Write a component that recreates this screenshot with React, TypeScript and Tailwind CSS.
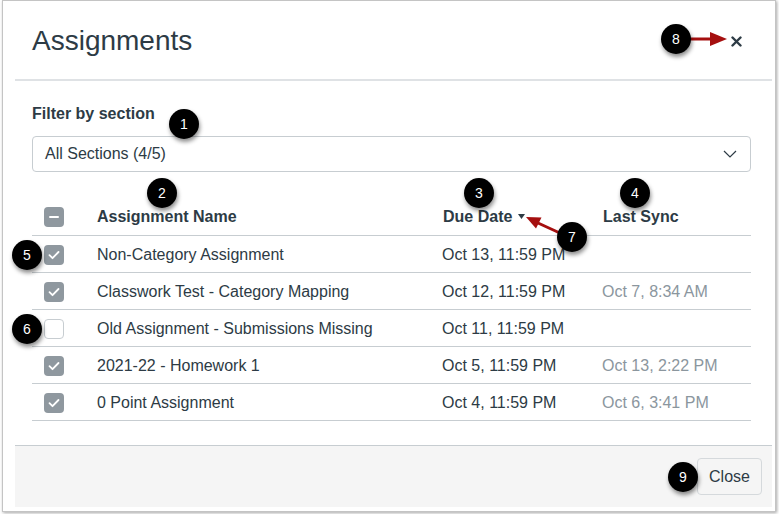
import React from "react";

type Row = {
  name: string;
  due: string;
  sync?: string;
  checked: boolean;
};

const rows: Row[] = [
  { name: "Non-Category Assignment", due: "Oct 13, 11:59 PM", checked: true },
  { name: "Classwork Test - Category Mapping", due: "Oct 12, 11:59 PM", sync: "Oct 7, 8:34 AM", checked: true },
  { name: "Old Assignment - Submissions Missing", due: "Oct 11, 11:59 PM", checked: false },
  { name: "2021-22 - Homework 1", due: "Oct 5, 11:59 PM", sync: "Oct 13, 2:22 PM", checked: true },
  { name: "0 Point Assignment", due: "Oct 4, 11:59 PM", sync: "Oct 6, 3:41 PM", checked: true },
];

function Checkbox({ checked }: { checked: boolean }) {
  if (!checked) {
    return <div className="ml-[12px] h-[20px] w-[20px] rounded-[4px] border border-[#c7cdd1] bg-white" />;
  }
  return (
    <div className="ml-[12px] flex h-[20px] w-[20px] items-center justify-center rounded-[4px] bg-[#8f989f]">
      <svg width="12" height="10" viewBox="0 0 12 10" fill="none">
        <path d="M1.5 5.2l3 3L10.5 2" stroke="white" strokeWidth="1.8" strokeLinecap="round" strokeLinejoin="round" />
      </svg>
    </div>
  );
}

function Badge({ n, className }: { n: number; className: string }) {
  return (
    <div
      className={
        "absolute flex h-[30px] w-[30px] items-center justify-center rounded-full bg-black text-[14px] leading-none text-white shadow-[1px_3px_4px_rgba(0,0,0,0.45)] " +
        className
      }
    >
      {n}
    </div>
  );
}

export default function App() {
  return (
    <div className="relative h-[514px] w-[779px] overflow-hidden bg-white pl-[2px] font-['Liberation_Sans',Arial,sans-serif] text-[#2d3b45]">
      <div className="flex h-[512px] w-[774px] flex-col border border-[#c4c4c4] bg-white pb-[4px] pl-[12px] pr-[3px] shadow-[1px_1px_3px_rgba(0,0,0,0.35)]">
        {/* header */}
        <div className="flex h-[80px] shrink-0 items-center justify-between border-b-2 border-[#dfe2e5] pl-[17px] pr-[30px] pt-[2px]">
          <h1 className="text-[28px] leading-[32px]">Assignments</h1>
          <svg width="11" height="11" viewBox="0 0 11 11">
            <path d="M1.5 1.5l8 8M9.5 1.5l-8 8" stroke="#2d3b45" strokeWidth="2.4" strokeLinecap="round" />
          </svg>
        </div>

        {/* body */}
        <div className="flex-1 pl-[17px] pr-[21px] pt-[23px]">
          <div className="text-[16px] font-bold leading-[20px]">Filter by section</div>
          <div className="mt-[12px] flex h-[36px] items-center justify-between rounded-[4px] border border-[#c7cdd1] pl-[12px] pr-[13px]">
            <span className="text-[16px] leading-[20px]">All Sections (4/5)</span>
            <svg width="14" height="8" viewBox="0 0 14 8" fill="none">
              <path d="M1 1l6 6 6-6" stroke="#2d3b45" strokeWidth="1.2" />
            </svg>
          </div>

          <div className="mt-[26px]">
            <div className="grid h-[38px] grid-cols-[65px_345px_160px_1fr] items-center border-b border-[#c7cdd1] text-[16px] font-bold leading-[20px]">
              <div className="ml-[12px] flex h-[20px] w-[20px] items-center justify-center rounded-[4px] bg-[#8f989f]">
                <div className="h-[2px] w-[10px] rounded bg-white" />
              </div>
              <div>Assignment Name</div>
              <div className="flex items-center gap-[6px] pl-[1px]">
                Due Date
                <svg width="7" height="5" viewBox="0 0 7 5">
                  <path d="M0 0h7L3.5 5z" fill="#2d3b45" />
                </svg>
              </div>
              <div className="pl-[1px]">Last Sync</div>
            </div>
            {rows.map((r) => (
              <div
                key={r.name}
                className="grid h-[37px] grid-cols-[65px_345px_160px_1fr] items-center border-b border-[#c7cdd1] pt-[1px] text-[16px] leading-[20px]"
              >
                <Checkbox checked={r.checked} />
                <div>{r.name}</div>
                <div>{r.due}</div>
                <div className="text-[#8b969e]">{r.sync ?? ""}</div>
              </div>
            ))}
          </div>
        </div>

        {/* footer */}
        <div className="flex h-[62px] shrink-0 items-center justify-end border-t border-[#c7cdd1] bg-[#f5f5f5] pr-[10px]">
          <button className="h-[37px] w-[65px] rounded-[4px] border border-[#d5d9dc] bg-[#f5f5f5] text-[16px] text-[#2d3b45]">
            Close
          </button>
        </div>
      </div>

      {/* annotation arrows */}
      <svg className="absolute left-0 top-0" width="779" height="514">
        <line x1="690" y1="39" x2="712" y2="39" stroke="#a50f0f" strokeWidth="3" />
        <path d="M710 32L727 39L710 46z" fill="#a50f0f" />
        <line x1="538" y1="223" x2="562" y2="234" stroke="#a50f0f" strokeWidth="3" />
        <path d="M526 217L536 228.5L541.5 217.5z" fill="#a50f0f" />
      </svg>

      <Badge n={1} className="left-[169px] top-[109px]" />
      <Badge n={2} className="left-[147px] top-[178px]" />
      <Badge n={3} className="left-[464px] top-[178px]" />
      <Badge n={4} className="left-[620px] top-[178px]" />
      <Badge n={5} className="left-[12px] top-[240px]" />
      <Badge n={6} className="left-[12px] top-[314px]" />
      <Badge n={7} className="left-[557px] top-[222px]" />
      <Badge n={8} className="left-[661px] top-[24px]" />
      <Badge n={9} className="left-[668px] top-[462px]" />
    </div>
  );
}
